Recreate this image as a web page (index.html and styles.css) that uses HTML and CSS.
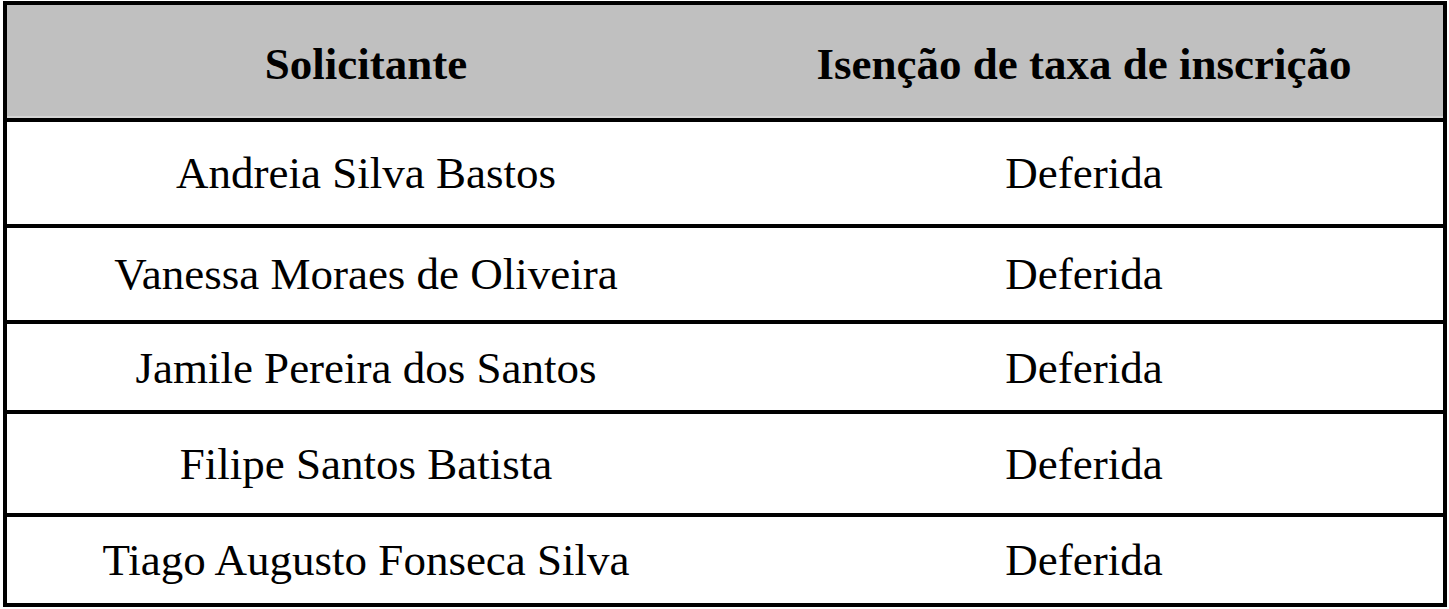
FILE: index.html
```html
<!DOCTYPE html>
<html lang="pt">
<head>
<meta charset="utf-8">
<title>Isenção de taxa de inscrição</title>
<link rel="stylesheet" href="styles.css">
</head>
<body>
<table class="result-table">
  <thead>
    <tr>
      <th class="col">Solicitante</th>
      <th class="col">Isenção de taxa de inscrição</th>
    </tr>
  </thead>
  <tbody>
    <tr class="row row-1">
      <td>Andreia Silva Bastos</td>
      <td>Deferida</td>
    </tr>
    <tr class="row row-2">
      <td>Vanessa Moraes de Oliveira</td>
      <td>Deferida</td>
    </tr>
    <tr class="row row-3">
      <td>Jamile Pereira dos Santos</td>
      <td>Deferida</td>
    </tr>
    <tr class="row row-4">
      <td>Filipe Santos Batista</td>
      <td>Deferida</td>
    </tr>
    <tr class="row row-5">
      <td>Tiago Augusto Fonseca Silva</td>
      <td>Deferida</td>
    </tr>
  </tbody>
</table>
</body>
</html>
```

FILE: styles.css
```css
html, body {
  margin: 0;
  padding: 0;
  background: #ffffff;
}

body {
  padding: 1px 0 0 3px;
  font-family: "Liberation Serif", "Times New Roman", serif;
  color: #000000;
}

.result-table {
  width: 1444px;
  border: 4px solid #000000;
  border-collapse: separate;
  border-spacing: 0;
  table-layout: fixed;
}

.result-table th,
.result-table td {
  box-sizing: border-box;
  width: 50%;
  padding: 0;
  text-align: center;
  vertical-align: middle;
  font-size: 45px;
  line-height: 52px;
}

.result-table th {
  height: 117px;
  padding-top: 5px;
  background: #c0c0c0;
  font-weight: bold;
  border-bottom: 4px solid #000000;
  box-shadow: inset 0 -2px 0 #d4d4d4;
}

.result-table td {
  font-weight: normal;
  border-bottom: 4px solid #000000;
}

.row-1 td { height: 106px; }
.row-2 td { height: 96px; }
.row-3 td { height: 90px; padding-top: 1px; }
.row-4 td { height: 103px; }
.row-5 td { height: 86px; border-bottom: 0; }
```
